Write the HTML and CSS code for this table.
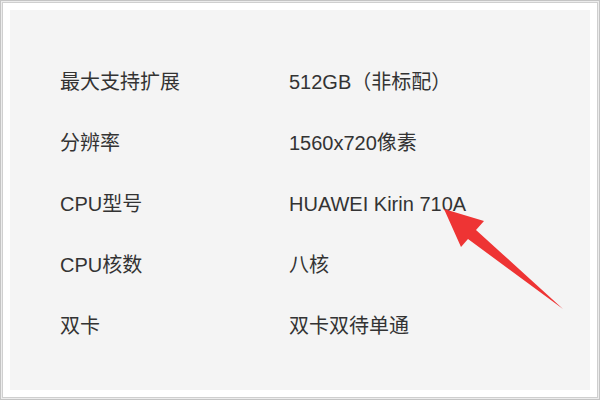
FILE: index.html
```html
<!DOCTYPE html>
<html lang="zh-CN">
<head>
<meta charset="utf-8">
<title>参数</title>
<link rel="stylesheet" href="styles.css">
</head>
<body>
<div class="frame">
  <div class="frame-inner">
    <div class="panel">
      <div class="row"><div class="label">最大支持扩展</div><div class="value">512GB（非标配）</div></div>
      <div class="row"><div class="label">分辨率</div><div class="value">1560x720像素</div></div>
      <div class="row"><div class="label">CPU型号</div><div class="value">HUAWEI Kirin 710A</div></div>
      <div class="row"><div class="label">CPU核数</div><div class="value">八核</div></div>
      <div class="row"><div class="label">双卡</div><div class="value">双卡双待单通</div></div>
      <svg class="arrow" width="600" height="400" viewBox="0 0 600 400">
        <polygon points="444,209 484,221 476,230 563,309 468,239 461,247" fill="#ee3434"/>
      </svg>
    </div>
  </div>
</div>
</body>
</html>
```

FILE: styles.css
```css
html, body {
  margin: 0;
  padding: 0;
  background: #fff;
}
.frame {
  width: 600px;
  height: 400px;
  box-sizing: border-box;
  border: 1px solid #c4c4c4;
  padding: 1px;
  background: #ececec;
}
.frame-inner {
  height: 100%;
  box-sizing: border-box;
  border: 1px solid #cfcfcf;
  background: #fff;
  padding: 7px;
}
.panel {
  height: 100%;
  box-sizing: border-box;
  background: #f4f4f4;
  padding: 42px 0 0 50px;
  font-family: "Liberation Sans", "Noto Sans CJK SC", sans-serif;
  font-size: 20px;
  color: #333;
}
.row {
  display: flex;
  height: 61px;
  line-height: 61px;
}
.label {
  width: 229px;
  flex: none;
}
.value {
  white-space: nowrap;
}
.arrow {
  position: absolute;
  left: 0;
  top: 0;
  pointer-events: none;
}
```
